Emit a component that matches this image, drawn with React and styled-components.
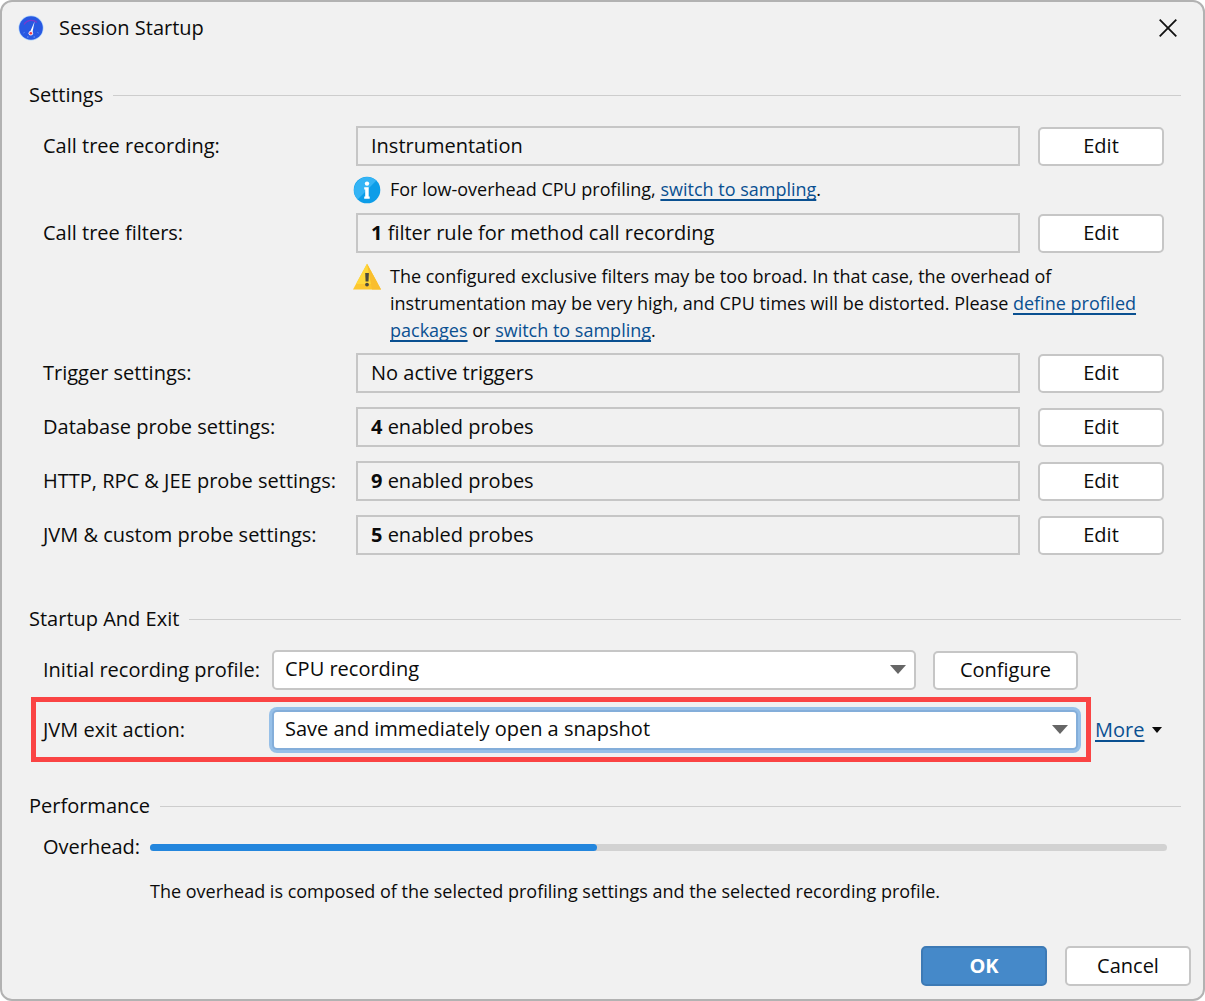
import React, {useState} from "react";
import styled, {createGlobalStyle} from "styled-components";


const GlobalStyle = createGlobalStyle`
  * {
    box-sizing: border-box;
  }
  body {
    margin: 0;
    background: #FFFFFF;
    color: #0B0B0B;
    font-family: "Open Sans", "Noto Sans", sans-serif;
    font-size: 20px;
    line-height: 28px;
  }
  button, select {
    font: inherit;
    color: inherit;
  }
`;

const Dialog = styled.main`
  display: flex;
  flex-direction: column;
  min-height: 100vh;
  background: #F1F1F1;
  border: 2px solid #B2B2B2;
  border-radius: 12px;
`;

const TitleBar = styled.header`
  display: flex;
  align-items: center;
  gap: 15px;
  height: 52px;
  padding: 0 26px 0 16px;
`;

const Title = styled.h1`
  flex: 1;
  margin: 0;
  font-size: 20px;
  font-weight: 400;
`;

const CloseButton = styled.button`
  display: flex;
  padding: 0;
  background: none;
  border: none;
  cursor: pointer;
`;

const Section = styled.section`
  padding: 0 22px 0 27px;
  margin-top: ${(props) => props.$top}px;
`;

const SectionTitle = styled.h2`
  display: flex;
  align-items: center;
  gap: 10px;
  margin: 0 0 ${(props) => props.$bottom || 17}px;
  font-size: 20px;
  font-weight: 400;

  &::after {
    content: "";
    flex: 1;
    border-top: 1px solid #CDCDCD;
  }
`;

const SettingsGrid = styled.div`
  display: grid;
  grid-template-columns: 313px 1fr 126px;
  align-items: center;
  padding: 0 17px 0 14px;
`;

const Label = styled.label`
  white-space: nowrap;
`;

const Field = styled.output`
  height: 40px;
  margin-right: 18px;
  padding: 4px 13px;
  border: 2px solid #C6C6C6;
`;

const Button = styled.button`
  width: ${(props) => props.$width || 126}px;
  height: ${(props) => props.$height || 39}px;
  padding: 0;
  background: ${(props) => (props.$primary ? "#4589C9" : "#FFFFFF")};
  border: 2px solid ${(props) => (props.$primary ? "#3D7AB5" : "#C6C6C6")};
  border-radius: 5px;
  color: ${(props) => (props.$primary ? "#FFFFFF" : "inherit")};
  font-weight: ${(props) => (props.$primary ? 700 : 400)};
  cursor: pointer;
`;

const Note = styled.div`
  grid-column: 2 / 4;
  display: flex;
  align-items: flex-start;
  gap: 9px;
  margin-left: -3px;
  padding: 10px 0 9px;
`;

const NoteText = styled.p`
  margin: 0;
  font-size: 18px;
  line-height: 27px;
`;

const Link = styled.a`
  color: #0A5091;
  text-decoration: underline;
  text-decoration-thickness: 2px;
  text-underline-offset: 3px;
  text-decoration-skip-ink: none;
`;

const Gap = styled.div`
  grid-column: 1 / 4;
  height: 14px;
`;

const ProfileRow = styled.div`
  display: flex;
  align-items: center;
  padding: 0 103px 0 14px;
`;

const ProfileLabel = styled(Label)`
  width: 229px;
`;

const SelectBox = styled.div`
  position: relative;
  flex: 1;
  margin-right: ${(props) => props.$gap || 0}px;

  svg {
    position: absolute;
    right: 10px;
    top: 15px;
    pointer-events: none;
  }
`;

const Select = styled.select`
  display: block;
  width: 100%;
  height: 40px;
  padding: 0 40px 2px 11px;
  appearance: none;
  background: #FFFFFF;
  border: 2px solid ${(props) => (props.$active ? "#84AEDA" : "#C6C6C6")};
  border-radius: 5px;
  box-shadow: ${(props) => (props.$active ? "0 0 0 3px #97C0E8" : "none")};
  outline: none;
`;

const ExitRow = styled.div`
  display: flex;
  align-items: center;
  gap: 4px;
  margin: 7px 0 0 2px;
`;

const Highlight = styled.div`
  flex: 1;
  display: flex;
  align-items: center;
  height: 65px;
  padding: 0 8px 0 7px;
  border: 5px solid #FA4444;
`;

const MoreLink = styled(Link)`
  display: flex;
  align-items: center;
  gap: 8px;
  width: 86px;
`;

const OverheadRow = styled.div`
  display: grid;
  grid-template-columns: 107px 1fr;
  align-items: center;
  row-gap: 17px;
  padding: 0 14px;
`;

const Progress = styled.progress`
  display: block;
  width: 100%;
  height: 7px;
  appearance: none;
  border: none;

  &::-webkit-progress-bar {
    background: #D2D2D2;
    border-radius: 4px;
  }
  &::-webkit-progress-value {
    background: #2386DD;
    border-radius: 4px;
  }
`;

const OverheadNote = styled(NoteText)`
  grid-column: 2;
`;

const Footer = styled.footer`
  display: flex;
  justify-content: flex-end;
  gap: 18px;
  margin-top: auto;
  padding: 0 12px 13px;
`;

function AppLogo() {
    return (
        <svg width="26" height="26" viewBox="0 0 26 26" aria-hidden="true">
            <circle cx="13" cy="13" r="12.5" fill="#A9D0FB"/>
            <circle cx="13" cy="13" r="11.8" fill="#2858E2"/>
            <path d="M6 9.500a8.500 8.500 0 0 1 13-2" fill="none" stroke="#7A3ACB" strokeWidth="1.2"/>
            <path d="M5.500 18l1-.6M20.500 18l-1-.6M9 22h1.500M15.500 22H17" stroke="#6E9BF5" strokeWidth="1"/>
            <path d="M16.600 6.500l-4.800 11 2.400.9z" fill="#FFFFFF"/>
            <circle cx="12.800" cy="18.200" r="2.300" fill="#F4E9F5"/>
            <circle cx="12.800" cy="18.200" r="1.300" fill="#EE3B45"/>
        </svg>
    );
}

function CloseIcon() {
    return (
        <svg width="18" height="18" viewBox="0 0 18 18" aria-hidden="true">
            <path d="M.7.7l16.600 16.600M17.300.7L.7 17.300" stroke="#111111" strokeWidth="1.8"/>
        </svg>
    );
}

const NoteIcon = styled.svg`
  flex-shrink: 0;
`;

function InfoIcon() {
    return (
        <NoteIcon width="28" height="28" viewBox="0 0 28 28" aria-hidden="true">
            <circle cx="14" cy="14" r="13.300" fill="#0D9DE8"/>
            <path d="M4.600 23.400A13.300 13.300 0 0 1 23.400 4.600z" fill="#34B4F5"/>
            <circle cx="14" cy="7.600" r="2.200" fill="#FFFFFF"/>
            <path d="M11.200 11.300h4.500v9.200h1v2.200h-5.500v-2.200h1v-7h-1z" fill="#FFFFFF"/>
        </NoteIcon>
    );
}

function WarningIcon() {
    return (
        <NoteIcon width="28" height="28" viewBox="0 0 28 28" aria-hidden="true">
            <path d="M14 .8L28 26.500H0z" fill="#FDC72F"/>
            <path d="M14 .8L25 21 3 21z" fill="#FFD83B"/>
            <path d="M14 .8L28 26.500H19z" fill="#F9BE2E"/>
            <path d="M12.200 10h3.700l-.4 8.500h-2.900z" fill="#4B4A3E"/>
            <circle cx="14" cy="21.600" r="1.900" fill="#4B4A3E"/>
        </NoteIcon>
    );
}

function Arrow({width = 16, height = 9, color = "#666666"}) {
    return (
        <svg width={width} height={height} viewBox="0 0 16 9" preserveAspectRatio="none" aria-hidden="true">
            <path d="M0 0h16L8 9z" fill={color}/>
        </svg>
    );
}

function Setting({id, label, count, text}) {
    return (
        <>
            <Label htmlFor={id}>{label}</Label>
            <Field id={id}>
                {count && <b>{count} </b>}
                {text}
            </Field>
            <Button type="button">Edit</Button>
        </>
    );
}


export default function App() {

    const [profile, setProfile] = useState("CPU recording");
    const [exitAction, setExitAction] = useState("Save and immediately open a snapshot");

    return (
        <>
            <GlobalStyle/>
            <Dialog>
                <TitleBar>
                    <AppLogo/>
                    <Title>Session Startup</Title>
                    <CloseButton type="button" aria-label="Close"><CloseIcon/></CloseButton>
                </TitleBar>

                <Section $top={27}>
                    <SectionTitle>Settings</SectionTitle>
                    <SettingsGrid>
                        <Setting id="recording" label="Call tree recording:" text="Instrumentation"/>
                        <Note>
                            <InfoIcon/>
                            <NoteText>
                                For low-overhead CPU profiling, <Link href="#sampling">switch to sampling</Link>.
                            </NoteText>
                        </Note>
                        <Setting id="filters" label="Call tree filters:" count="1" text="filter rule for method call recording"/>
                        <Note>
                            <WarningIcon/>
                            <NoteText>
                                The configured exclusive filters may be too broad. In that case, the overhead of
                                instrumentation may be very high, and CPU times will be distorted. Please{" "}
                                <Link href="#packages">define profiled packages</Link> or{" "}
                                <Link href="#sampling">switch to sampling</Link>.
                            </NoteText>
                        </Note>
                        <Setting id="triggers" label="Trigger settings:" text="No active triggers"/>
                        <Gap/>
                        <Setting id="database" label="Database probe settings:" count="4" text="enabled probes"/>
                        <Gap/>
                        <Setting id="http" label="HTTP, RPC & JEE probe settings:" count="9" text="enabled probes"/>
                        <Gap/>
                        <Setting id="jvm" label="JVM & custom probe settings:" count="5" text="enabled probes"/>
                    </SettingsGrid>
                </Section>

                <Section $top={50}>
                    <SectionTitle>Startup And Exit</SectionTitle>
                    <ProfileRow>
                        <ProfileLabel htmlFor="profile">Initial recording profile:</ProfileLabel>
                        <SelectBox $gap={17}>
                            <Select id="profile" value={profile} onChange={(event) => setProfile(event.target.value)}>
                                <option>CPU recording</option>
                            </Select>
                            <Arrow/>
                        </SelectBox>
                        <Button type="button" $width={145}>Configure</Button>
                    </ProfileRow>
                    <ExitRow>
                        <Highlight>
                            <ProfileLabel htmlFor="exit">JVM exit action:</ProfileLabel>
                            <SelectBox>
                                <Select id="exit" $active value={exitAction} onChange={(event) => setExitAction(event.target.value)}>
                                    <option>Save and immediately open a snapshot</option>
                                </Select>
                                <Arrow/>
                            </SelectBox>
                        </Highlight>
                        <MoreLink href="#more">More <Arrow width={10} height={6} color="#0B0B0B"/></MoreLink>
                    </ExitRow>
                </Section>

                <Section $top={30}>
                    <SectionTitle $bottom={13}>Performance</SectionTitle>
                    <OverheadRow>
                        <Label htmlFor="overhead">Overhead:</Label>
                        <Progress id="overhead" value={44} max={100}/>
                        <OverheadNote>
                            The overhead is composed of the selected profiling settings and the selected recording profile.
                        </OverheadNote>
                    </OverheadRow>
                </Section>

                <Footer>
                    <Button type="button" $primary $height={40}>OK</Button>
                    <Button type="button" $height={40}>Cancel</Button>
                </Footer>
            </Dialog>
        </>
    );
}
